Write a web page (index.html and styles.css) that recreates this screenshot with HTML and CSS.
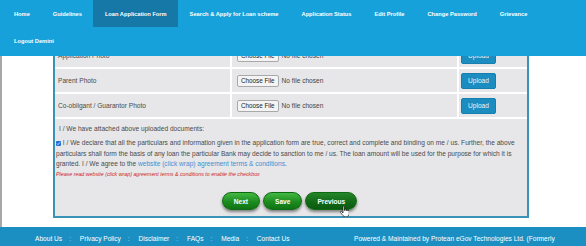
FILE: index.html
```html
<!DOCTYPE html>
<html lang="en">
<head>
<meta charset="utf-8">
<title>Loan Application Form</title>
<link rel="stylesheet" href="styles.css">
</head>
<body>
<header class="topnav">
  <nav class="menu">
    <a class="menu-item" href="#">Home</a>
    <a class="menu-item" href="#">Guidelines</a>
    <a class="menu-item active" href="#">Loan Application Form</a>
    <a class="menu-item" href="#">Search &amp; Apply for Loan scheme</a>
    <a class="menu-item" href="#">Application Status</a>
    <a class="menu-item" href="#">Edit Profile</a>
    <a class="menu-item" href="#">Change Password</a>
    <a class="menu-item" href="#">Grievance</a>
    <a class="menu-item" href="#">Logout Demini</a>
  </nav>
</header>

<main class="page">
  <section class="form-box">
    <div class="doc-grid">
      <div class="cell label">Application Photo</div>
      <div class="cell file"><span class="file-btn">Choose File</span><span class="file-name">No file chosen</span></div>
      <div class="cell action"><button class="upload" type="button">Upload</button></div>

      <div class="cell label">Parent Photo</div>
      <div class="cell file"><span class="file-btn">Choose File</span><span class="file-name">No file chosen</span></div>
      <div class="cell action"><button class="upload" type="button">Upload</button></div>

      <div class="cell label">Co-obligant / Guarantor Photo</div>
      <div class="cell file"><span class="file-btn">Choose File</span><span class="file-name">No file chosen</span></div>
      <div class="cell action"><button class="upload" type="button">Upload</button></div>
    </div>

    <div class="confirm">
      <p class="attached">I / We have attached above uploaded documents:</p>
      <p class="declare"><span class="check"><svg viewBox="0 0 10 10" width="5" height="5"><path d="M2 5.2l2 2 4-4.4" fill="none" stroke="#fff" stroke-width="1.6"/></svg></span> I / We declare that all the particulars and information given in the application form are true, correct and complete and binding on me / us. Further, the above particulars shall form the basis of any loan the particular Bank may decide to sanction to me / us. The loan amount will be used for the purpose for which it is granted. I / We agree to the <a class="link" href="#">website (click wrap) agreement terms &amp; conditions</a>.</p>
      <p class="note">Please read website (click wrap) agreement terms &amp; conditions to enable the checkbox</p>
      <div class="actions">
        <button class="pill" type="button">Next</button>
        <button class="pill" type="button">Save</button>
        <button class="pill hover" type="button">Previous</button>
        <svg class="cursor" width="9" height="11" viewBox="0 0 18 22"><path d="M6 1.5c0-.8.6-1.5 1.5-1.5S9 .7 9 1.5V9h.5V7.5c0-.8.6-1.4 1.4-1.4s1.4.6 1.4 1.4V9.5h.4V8.5c0-.8.6-1.4 1.4-1.4s1.4.6 1.4 1.4v1.5h.3c0-.8.6-1.3 1.3-1.3s1.3.6 1.3 1.3V15c0 3.5-2.5 6.5-6 6.5h-2c-2 0-3.5-1-4.5-2.5L1 13c-.5-.8-.2-1.7.5-2.1.7-.4 1.6-.2 2.1.5L6 14V1.5z" fill="#fff" stroke="#000" stroke-width="1.3"/></svg>
      </div>
    </div>
  </section>
</main>

<footer class="site-footer">
  <div class="links">
    <a href="#">About Us</a><span class="sep">:</span>
    <a href="#">Privacy Policy</a><span class="sep">:</span>
    <a href="#">Disclaimer</a><span class="sep">:</span>
    <a href="#">FAQs</a><span class="sep">:</span>
    <a href="#">Media</a><span class="sep">:</span>
    <a href="#">Contact Us</a>
  </div>
  <div class="credit">Powered &amp; Maintained by Protean eGov Technologies Ltd. (Formerly</div>
</footer>
</body>
</html>
```

FILE: styles.css
```css
html, body {
  margin: 0;
  padding: 0;
  overflow: hidden;
  background: #ffffff;
  font-family: "Liberation Sans", Arial, sans-serif;
  color: #444;
}

.topnav {
  position: fixed;
  top: 0;
  left: 0;
  right: 0;
  z-index: 5;
  background: #17a1db;
  padding: 0 0 2px 2.5px;
}

.menu {
  display: flex;
  flex-wrap: wrap;
}

.menu-item {
  display: flex;
  align-items: center;
  height: 27px;
  padding: 0 11.5px;
  color: #fff;
  font-size: 5.7px;
  font-weight: bold;
  text-decoration: none;
  white-space: nowrap;
}

.menu-item.active {
  background: #1578a6;
}

.page {
  padding: 42px 0 9px;
  border-left: 2px solid #a8a8a8;
}

.form-box {
  margin-left: 51px;
  width: 472px;
  border: 2px solid #3a93b7;
  background: #e7e7e9;
}

.doc-grid {
  display: grid;
  grid-template-columns: 175px 225px 1fr;
  gap: 2px;
  background: #ffffff;
  padding-bottom: 2px;
}

.cell {
  background: #e7e7e9;
  height: 23px;
  display: flex;
  align-items: center;
  font-size: 6.6px;
  color: #4a4a4a;
}

.cell.label {
  padding-left: 3px;
}

.cell.file {
  padding-left: 5px;
}

.cell.action {
  padding-left: 2px;
}

.file-btn {
  display: inline-block;
  padding: 1.5px 3px;
  border: 1px solid #a9a9a9;
  border-radius: 2px;
  background: #f4f4f4;
  color: #222;
  font-size: 6.3px;
  line-height: 7px;
}

.file-name {
  margin-left: 3px;
  color: #444;
}

.upload {
  height: 16px;
  padding: 0 6px;
  border: 1px solid #177fae;
  border-radius: 2px;
  background: #1c8dc0;
  color: #e8f4fa;
  font-family: inherit;
  font-size: 6.6px;
}

.confirm {
  padding: 5px 4px 6px 1px;
}

.attached {
  margin: 0 0 3.5px;
  padding-left: 3px;
  font-size: 6.6px;
  line-height: 10.5px;
  color: #4a4a4a;
}

.declare {
  margin: 0;
  font-size: 6.6px;
  line-height: 10.5px;
  color: #4a4a4a;
}

.check {
  display: inline-flex;
  align-items: center;
  justify-content: center;
  width: 5px;
  height: 5px;
  border-radius: 1px;
  background: #1f6ed4;
  vertical-align: -0.5px;
}

.check svg {
  display: block;
}

.link {
  color: #3f8fd2;
  text-decoration: none;
}

.note {
  margin: 0;
  font-size: 5.3px;
  line-height: 8px;
  font-style: italic;
  color: #d21d1d;
}

.actions {
  position: relative;
  display: flex;
  justify-content: center;
  gap: 3px;
  margin-top: 14.5px;
}

.pill {
  height: 18px;
  padding: 0 11px;
  border: 1px solid #0e6a12;
  border-radius: 9px;
  background: linear-gradient(#43b843, #1c8c1f 55%, #0f7313);
  color: #fff;
  font-family: inherit;
  font-size: 6.6px;
  font-weight: bold;
  box-shadow: 0 2px 3px rgba(0, 0, 0, 0.45);
}

.pill.hover {
  background: linear-gradient(#25862a, #126a17 55%, #0c5a10);
}

.cursor {
  position: absolute;
  left: 284px;
  top: 14px;
}

.site-footer {
  display: flex;
  height: 19px;
  overflow: hidden;
  background: #1c8fc2;
  color: #fff;
  font-size: 6.6px;
  line-height: 8px;
}

.links {
  padding: 8px 0 0 35px;
  width: 292px;
  flex: none;
  white-space: nowrap;
}

.links a {
  color: #fff;
  text-decoration: none;
}

.sep {
  margin: 0 7px;
  color: #b9dcec;
}

.credit {
  margin-left: 27px;
  padding-top: 8px;
  white-space: nowrap;
}
```
